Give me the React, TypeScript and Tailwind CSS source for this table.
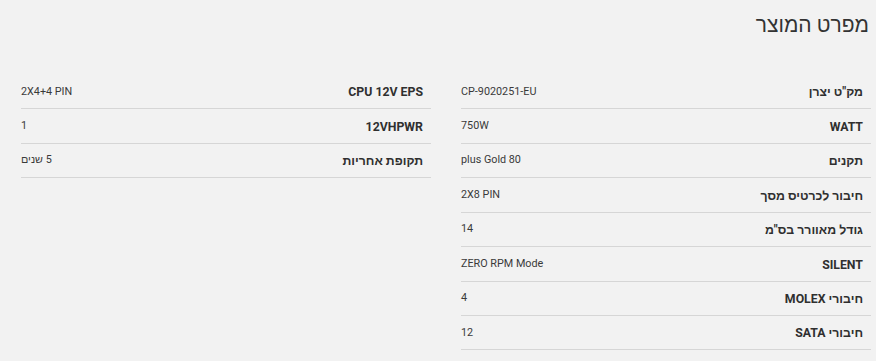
const rightSpecs = [
  { label: 'מק"ט יצרן', value: 'CP-9020251-EU' },
  { label: 'WATT', value: '750W' },
  { label: 'תקנים', value: 'plus Gold 80' },
  { label: 'חיבור לכרטיס מסך', value: '2X8 PIN' },
  { label: 'גודל מאוורר בס"מ', value: '14' },
  { label: 'SILENT', value: 'ZERO RPM Mode' },
  { label: 'חיבורי MOLEX', value: '4' },
  { label: 'חיבורי SATA', value: '12' },
]

const leftSpecs = [
  { label: 'CPU 12V EPS', value: '2X4+4 PIN' },
  { label: '12VHPWR', value: '1' },
  { label: 'תקופת אחריות', value: '5 שנים' },
]

function SpecRow({ label, value }: { label: string; value: string }) {
  return (
    <div className="flex items-center justify-between h-[34.43px] border-b border-[#d6d6d6]">
      <span className="pr-2 pt-[2px] text-[12.3px] font-bold text-[#2f2f2f]">{label}</span>
      <span dir="auto" className="text-[10.8px] text-[#3a3a3a]">{value}</span>
    </div>
  )
}

export default function App() {
  return (
    <div
      dir="rtl"
      className="min-h-[361px] w-[876px] bg-[#f2f2f2] pl-[21px] pr-[5px] pt-[10px]"
      style={{ fontFamily: 'Roboto, "Noto Sans", sans-serif' }}
    >
      <h2 className="pr-[2px] text-[21px] leading-[30px] text-[#333333]">מפרט המוצר</h2>
      <div className="mt-[35px] grid grid-cols-2 gap-[30px]">
        <div>
          {rightSpecs.map((s) => (
            <SpecRow key={s.label} {...s} />
          ))}
        </div>
        <div>
          {leftSpecs.map((s) => (
            <SpecRow key={s.label} {...s} />
          ))}
        </div>
      </div>
    </div>
  )
}
